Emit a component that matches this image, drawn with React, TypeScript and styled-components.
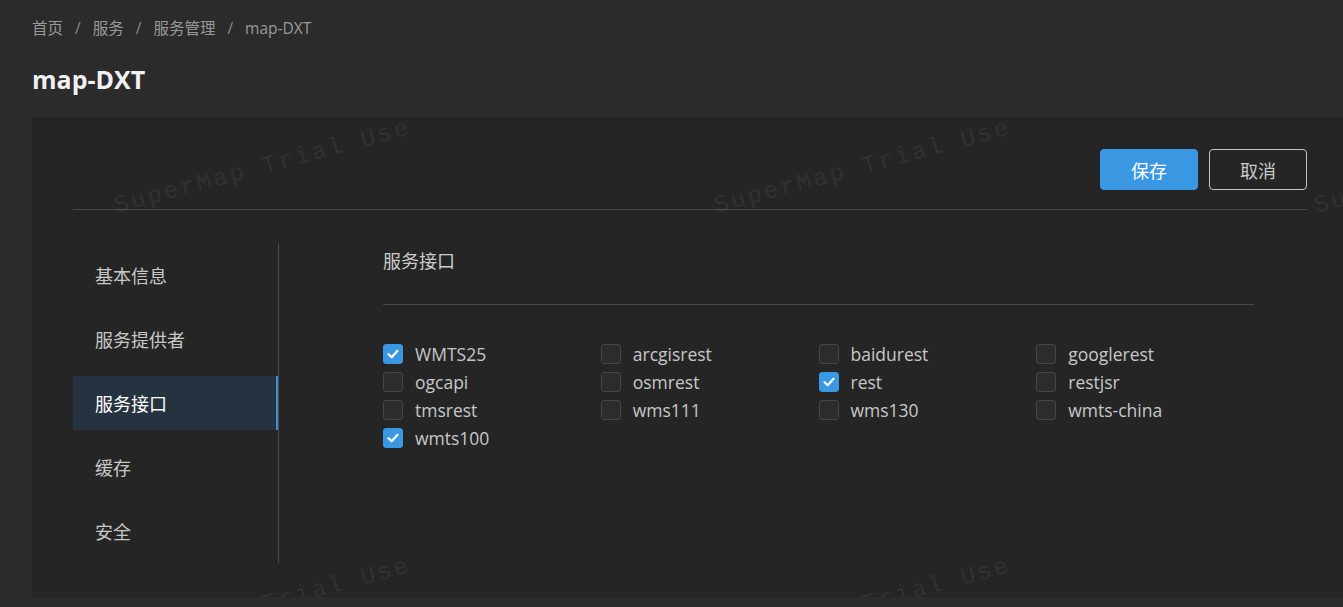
import React from "react";
import styled, { createGlobalStyle, css } from "styled-components";

const GlobalStyle = createGlobalStyle`
  html, body {
    margin: 0;
    padding: 0;
    background: #2b2b2b;
    overflow: hidden;
  }
  body {
    font-family: "Open Sans", "Noto Sans CJK SC", sans-serif;
    color: #cccccc;
  }
  * { box-sizing: border-box; }
`;

const Page = styled.div`
  padding: 17px 0 0 32px;
  width: 1400px;
`;

const Breadcrumb = styled.nav`
  display: flex;
  align-items: center;
  height: 22px;
  font-size: 15.5px;
  color: #9a9a9a;
`;

const Crumb = styled.span`
  line-height: 22px;
`;

const Sep = styled.span`
  margin: 0 12px;
  color: #8a8a8a;
`;

const Title = styled.h1`
  margin: 24px 0 0;
  font-size: 25px;
  line-height: 32px;
  font-weight: 700;
  color: #f0f0f0;
`;

const Card = styled.section`
  position: relative;
  overflow: hidden;
  margin-top: 22px;
  width: 1316px;
  height: 480px;
  background: #252525;
  padding: 32px 41px;
`;

const Toolbar = styled.div`
  display: flex;
  justify-content: flex-end;
  gap: 11px;
`;

const Button = styled.button<{ $primary?: boolean }>`
  width: 98px;
  height: 41px;
  border-radius: 4px;
  font-family: inherit;
  font-size: 18px;
  cursor: pointer;
  ${(p) =>
    p.$primary
      ? css`
          background: #3a98e2;
          border: 1px solid #3a98e2;
          color: #ffffff;
        `
      : css`
          background: transparent;
          border: 1px solid #c4c4c4;
          color: #c8c8c8;
        `}
`;

const Rule = styled.hr`
  margin: 0;
  border: 0;
  height: 1px;
  background: #474747;
`;

const ToolbarRule = styled(Rule)`
  margin-top: 19px;
`;

const Body = styled.div`
  display: flex;
  margin-top: 33px;
`;

const SideNav = styled.ul`
  list-style: none;
  margin: 0;
  padding: 5px 0;
  width: 206px;
  border-right: 1px solid #4a4a4a;
  display: flex;
  flex-direction: column;
  gap: 10px;
`;

const NavItem = styled.li<{ $active?: boolean }>`
  height: 54px;
  display: flex;
  align-items: center;
  padding-left: 22px;
  font-size: 18px;
  color: #c8c8c8;
  ${(p) =>
    p.$active &&
    css`
      background: #253240;
      color: #ffffff;
      box-shadow: inset -2px 0 0 #3a8fd6;
    `}
`;

const Content = styled.div`
  margin-left: 104px;
  width: 871px;
  padding-top: 6px;
`;

const SectionTitle = styled.h2`
  margin: 0;
  font-size: 18px;
  line-height: 24px;
  font-weight: 400;
  color: #cccccc;
`;

const SectionRule = styled(Rule)`
  margin-top: 31px;
`;

const OptionGrid = styled.div`
  margin-top: 35px;
  display: grid;
  grid-template-columns: repeat(4, 1fr);
  grid-auto-rows: 28px;
`;

const Option = styled.label`
  display: flex;
  align-items: center;
  gap: 12px;
  font-size: 17.5px;
  color: #c8c8c8;
  cursor: pointer;
`;

const Box = styled.span<{ $checked?: boolean }>`
  flex: none;
  width: 20px;
  height: 20px;
  border-radius: 3px;
  display: flex;
  align-items: center;
  justify-content: center;
  ${(p) =>
    p.$checked
      ? css`
          background: #3a98e2;
          border: 1px solid #3a98e2;
        `
      : css`
          background: #2c2c2c;
          border: 1px solid #464646;
        `}
`;

const Watermarks = styled.div`
  position: absolute;
  inset: 0;
  pointer-events: none;
`;

const Mark = styled.span`
  position: absolute;
  white-space: nowrap;
  font-family: "Liberation Mono", "DejaVu Sans Mono", monospace;
  font-size: 24px;
  line-height: 28px;
  letter-spacing: 2.6px;
  color: rgba(255, 255, 255, 0.07);
  transform-origin: left center;
  transform: rotate(-15deg);
`;

const navItems = ["基本信息", "服务提供者", "服务接口", "缓存", "安全"];

const options: { name: string; checked?: boolean }[] = [
  { name: "WMTS25", checked: true },
  { name: "arcgisrest" },
  { name: "baidurest" },
  { name: "googlerest" },
  { name: "ogcapi" },
  { name: "osmrest" },
  { name: "rest", checked: true },
  { name: "restjsr" },
  { name: "tmsrest" },
  { name: "wms111" },
  { name: "wms130" },
  { name: "wmts-china" },
  { name: "wmts100", checked: true },
];

const Check = () => (
  <svg width="14" height="14" viewBox="0 0 14 14" fill="none">
    <path
      d="M2.5 7.2 L5.7 10.2 L11.5 3.8"
      stroke="#ffffff"
      strokeWidth="2.2"
      strokeLinecap="round"
      strokeLinejoin="round"
    />
  </svg>
);

// repeating "trial" stamp laid over the card
const markSpots: { left: number; top: number }[] = [];
for (let row = 0; row < 2; row++) {
  for (let col = 0; col < 3; col++) {
    markSpots.push({ left: 83 + col * 600, top: 76 + row * 438 });
  }
}

export default function App() {
  const crumbs = ["首页", "服务", "服务管理", "map-DXT"];
  return (
    <>
      <GlobalStyle />
      <Page>
        <Breadcrumb>
          {crumbs.map((c, i) => (
            <React.Fragment key={c}>
              {i > 0 && <Sep>/</Sep>}
              <Crumb>{c}</Crumb>
            </React.Fragment>
          ))}
        </Breadcrumb>
        <Title>map-DXT</Title>
        <Card>
          <Toolbar>
            <Button $primary>保存</Button>
            <Button>取消</Button>
          </Toolbar>
          <ToolbarRule />
          <Body>
            <SideNav>
              {navItems.map((n) => (
                <NavItem key={n} $active={n === "服务接口"}>
                  {n}
                </NavItem>
              ))}
            </SideNav>
            <Content>
              <SectionTitle>服务接口</SectionTitle>
              <SectionRule />
              <OptionGrid>
                {options.map((o) => (
                  <Option key={o.name}>
                    <Box $checked={o.checked}>{o.checked && <Check />}</Box>
                    {o.name}
                  </Option>
                ))}
              </OptionGrid>
            </Content>
          </Body>
          <Watermarks>
            {markSpots.map((s, i) => (
              <Mark key={i} style={{ left: s.left, top: s.top }}>
                SuperMap Trial Use
              </Mark>
            ))}
          </Watermarks>
        </Card>
      </Page>
    </>
  );
}
